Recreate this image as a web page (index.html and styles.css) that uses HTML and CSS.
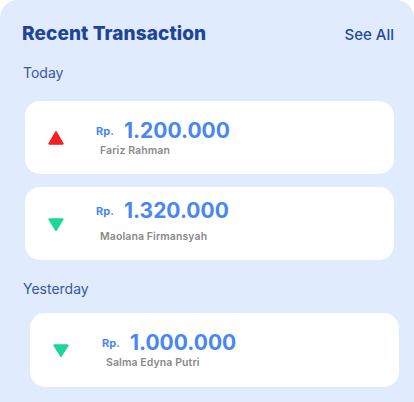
FILE: index.html
```html
<!DOCTYPE html>
<html>
<head>
<meta charset="utf-8">
<link rel="stylesheet" href="styles.css">
</head>
<body>
<section class="panel">
  <header class="panel-head">
    <h2 class="title">Recent Transaction</h2>
    <a class="see-all">See All</a>
  </header>

  <div class="group-label">Today</div>
  <div class="card">
    <svg class="arrow" width="16" height="15" viewBox="0 0 16 15"><path d="M8 1.2 L15.2 13.6 Q15.4 14.2 14.8 14.2 L1.2 14.2 Q0.6 14.2 0.8 13.6 Z" fill="#F41E1E" stroke="#F41E1E" stroke-width="1" stroke-linejoin="round"/></svg>
    <div class="info">
      <div class="amount-row"><span class="cur">Rp.</span><span class="amount">1.200.000</span></div>
      <div class="name">Fariz Rahman</div>
    </div>
  </div>
  <div class="card card-two">
    <svg class="arrow" width="16" height="14" viewBox="0 0 16 14"><path d="M8 13 L15.2 1.4 Q15.4 0.8 14.8 0.8 L1.2 0.8 Q0.6 0.8 0.8 1.4 Z" fill="#1ED697" stroke="#1ED697" stroke-width="1" stroke-linejoin="round"/></svg>
    <div class="info">
      <div class="amount-row"><span class="cur">Rp.</span><span class="amount">1.320.000</span></div>
      <div class="name">Maolana Firmansyah</div>
    </div>
  </div>

  <div class="group-label group-label-second">Yesterday</div>
  <div class="card card-three">
    <svg class="arrow" width="16" height="14" viewBox="0 0 16 14"><path d="M8 13 L15.2 1.4 Q15.4 0.8 14.8 0.8 L1.2 0.8 Q0.6 0.8 0.8 1.4 Z" fill="#1ED697" stroke="#1ED697" stroke-width="1" stroke-linejoin="round"/></svg>
    <div class="info">
      <div class="amount-row"><span class="cur">Rp.</span><span class="amount">1.000.000</span></div>
      <div class="name">Salma Edyna Putri</div>
    </div>
  </div>
</section>
</body>
</html>
```

FILE: styles.css
```css
html, body {
  margin: 0;
  padding: 0;
  background: #ffffff;
}
body {
  font-family: "Inter", "Noto Sans", sans-serif;
  width: 414px;
  height: 402px;
  overflow: hidden;
}
.panel {
  background: #E1EBFE;
  border-radius: 18px 18px 0 0;
  height: 420px;
  padding: 22px 20px 0 22px;
  box-sizing: border-box;
}
.panel-head {
  display: flex;
  justify-content: space-between;
  align-items: baseline;
  height: 24px;
}
.title {
  margin: 0;
  font-size: 19px;
  font-weight: 800;
  color: #1D4497;
  line-height: 24px;
  letter-spacing: 0.1px;
}
.see-all {
  font-size: 15px;
  font-weight: 500;
  color: #23479A;
  line-height: 24px;
}
.group-label {
  margin-top: 18px;
  font-size: 14px;
  color: #3657A6;
  line-height: 18px;
  margin-left: 1px;
}
.card {
  margin-top: 19px;
  margin-left: 3px;
  width: 369px;
  height: 73px;
  background: #ffffff;
  border-radius: 15px;
  display: flex;
  align-items: center;
  box-sizing: border-box;
  padding-left: 23px;
}
.card + .card {
  margin-top: 13px;
}
.arrow {
  flex: none;
  margin-top: -1px;
}
.info {
  margin-left: 32px;
  margin-top: 1px;
}
.amount-row {
  display: flex;
  align-items: baseline;
  line-height: 24px;
}
.cur {
  font-size: 11px;
  font-weight: 700;
  color: #4A86F3;
  position: relative;
  top: -3px;
  width: 28px;
}
.amount {
  font-size: 21px;
  font-weight: 700;
  color: #4A86F3;
  letter-spacing: 0;
}
.name {
  margin-top: -2px;
  margin-left: 4px;
  font-size: 10.5px;
  font-weight: 600;
  color: #8A8A8A;
  line-height: 14px;
  letter-spacing: 0.1px;
}
.card-two .info {
  margin-top: -4px;
}
.card-two .arrow {
  margin-top: 2px;
}
.card-two .name {
  margin-top: 4px;
}
.group-label-second {
  margin-top: 20px;
}
.card-three {
  margin-left: 8px;
  margin-top: 15px;
  height: 74px;
}
.card-three .info {
  margin-left: 33px;
}
.card-three .arrow {
  margin-top: 2px;
}
```
